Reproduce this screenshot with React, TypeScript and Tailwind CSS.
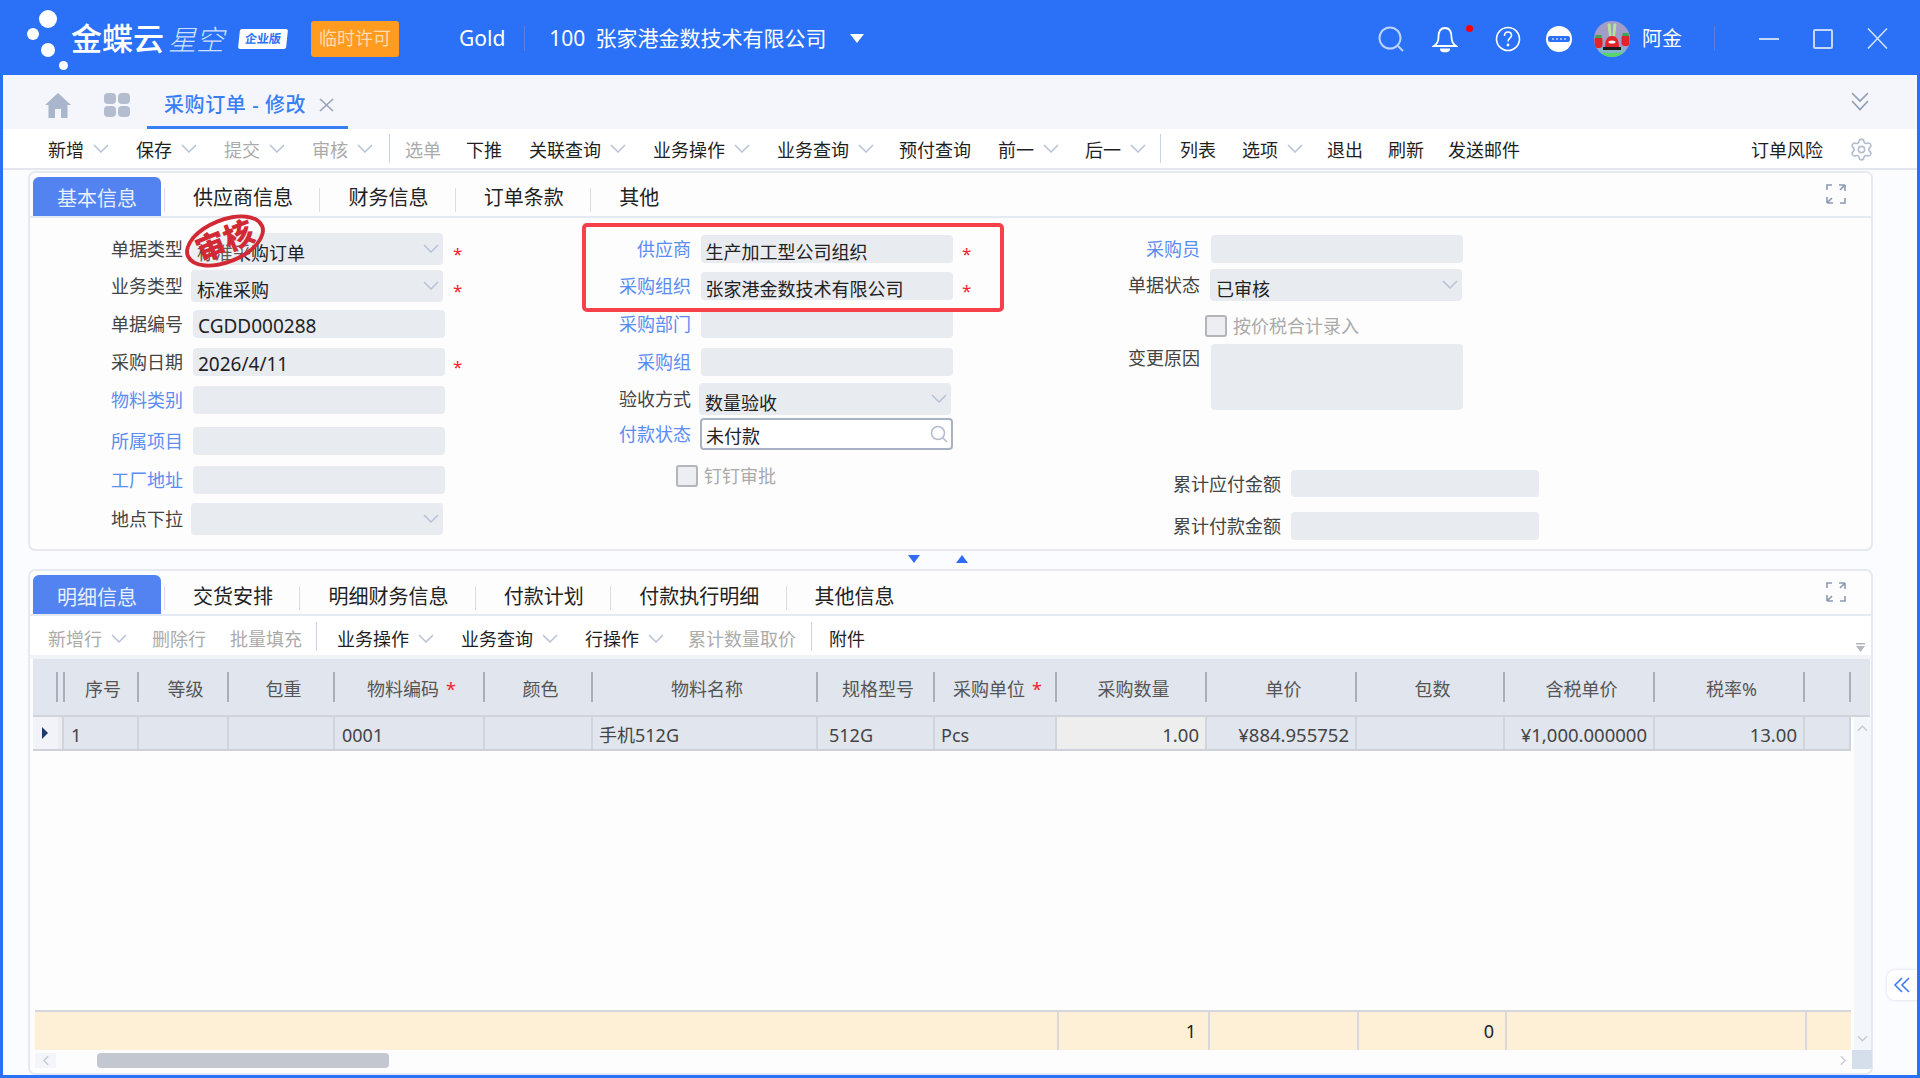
import React from "react";
import { Settings } from "lucide-react";

const FONT = "font-['Noto_Sans','Noto_Sans_CJK_SC',sans-serif]";
const GRID =
  "grid grid-cols-[25px_6px_75px_90px_106px_150px_108px_225px_117px_122px_150px_150px_148px_150px_150px_46px]";

function Chev({ className = "" }: { className?: string }) {
  return (
    <svg viewBox="0 0 16 9" className={"w-[16px] h-[9px] shrink-0 " + className} fill="none" stroke="#b8c2d6" strokeWidth="1.5">
      <path d="M1 1 L8 8 L15 1" />
    </svg>
  );
}

function ToolItem({
  label,
  chev,
  gray,
  cls = "",
}: {
  label: string;
  chev?: boolean;
  gray?: boolean;
  cls?: string;
}) {
  return (
    <div className={"flex items-center shrink-0 " + cls}>
      <span className={"text-[18px] leading-none whitespace-nowrap " + (gray ? "text-[#ababab]" : "text-[#1f1f1f]")}>{label}</span>
      {chev && <Chev className="ml-[9px] -mt-[2px]" />}
    </div>
  );
}

function Sep({ cls = "" }: { cls?: string }) {
  return <div className={"w-px h-[29px] bg-[#c9d3e4] shrink-0 " + cls} />;
}

function Expand() {
  return (
    <svg viewBox="0 0 20 20" className="w-[20px] h-[20px]" fill="none" stroke="#8c99b4" strokeWidth="1.6">
      <path d="M1 6 V1 H6" />
      <path d="M13 1 H19 M19 1 V7 M19 1 L14 6" />
      <path d="M1 13 V19 M1 19 H7 M1 19 L6 14" />
      <path d="M14 19 H19 V14" />
    </svg>
  );
}

function Label({ text, blue, cls = "" }: { text: string; blue?: boolean; cls?: string }) {
  return (
    <div className={"text-right text-[18px] leading-none shrink-0 whitespace-nowrap " + (blue ? "text-[#5a8cf2] " : "text-[#444444] ") + cls}>
      {text}
    </div>
  );
}

function Star({ cls = "" }: { cls?: string }) {
  return <span className={"text-[#f5222d] text-[17px] leading-none pt-[9px] " + cls}>*</span>;
}

function Box({ text, select, latin, cls = "" }: { text?: string; select?: boolean; latin?: boolean; cls?: string }) {
  return (
    <div className={"flex items-center justify-between bg-[#e8ebf0] rounded-[4px] shrink-0 text-[#222222] leading-none " + (latin ? "text-[19px] " : "text-[18px] ") + cls}>
      <span className={"whitespace-nowrap " + (select ? "pl-[6px] pt-[7px]" : latin ? "pl-[5px] pt-[4px]" : "pl-[4.5px] pt-[5px]")}>{text}</span>
      {select && <Chev className="mr-[4px] mb-[1px]" />}
    </div>
  );
}

function Check({ label, cls = "" }: { label: string; cls?: string }) {
  return (
    <div className={"flex items-center " + cls}>
      <div className="w-[22px] h-[22px] rounded-[3px] border-2 border-[#b3b5ba] bg-[#eceef2] shrink-0" />
      <span className="ml-[6px] text-[18px] leading-none text-[#aaaaaa] whitespace-nowrap">{label}</span>
    </div>
  );
}

function TabStrip({ tabs, lower }: { tabs: string[]; lower?: boolean }) {
  return (
    <div className="flex items-stretch h-[45px] pl-[3px] border-b-2 border-[#e5e9f1] shrink-0">
      <div className="w-[128px] mt-[4px] rounded-t-[6px] bg-[#5383f0] flex items-center justify-center text-[20px] leading-none text-[#e8efff]">
        <span className={lower ? "pt-[7px]" : "pt-[4px]"}>{tabs[0]}</span>
      </div>
      {tabs.slice(1).map((t) => (
        <div key={t} className="flex items-center">
          <div className="w-px h-[24px] bg-[#d8dee9] mt-[10px] ml-[3px]" />
          <span className={"ml-[28px] mr-[23.4px] text-[20px] leading-none text-[#222222] whitespace-nowrap " + (lower ? "pt-[9px]" : "pt-[7px]")}>{t}</span>
        </div>
      ))}
      <div className={"ml-auto pr-[25px] " + (lower ? "pt-[11px]" : "pt-[11px]")}>
        <Expand />
      </div>
    </div>
  );
}

function HCell({ text, star }: { text?: string; star?: boolean }) {
  return (
    <div className="flex items-center h-full">
      <div className="flex-1 text-center text-[18px] leading-none text-[#555555] whitespace-nowrap pl-[5px] pt-[4px]">
        {text}
        {star && <span className="ml-[7px] text-[#f5222d]">*</span>}
      </div>
      <div className="w-[2px] h-[30px] bg-[#a9aeb8] shrink-0" />
    </div>
  );
}

function RCell({ text, right, cls = "", textCls = "" }: { text?: string; right?: boolean; cls?: string; textCls?: string }) {
  return (
    <div
      className={
        "flex items-center h-full border-r-2 border-[#d0d4dc] leading-none text-[#444444] whitespace-nowrap pt-[4px] " +
        (right ? "text-[18.5px] justify-end pr-[6px] " : "text-[18px] pl-[6px] ") +
        cls
      }
    >
      <span className={textCls}>{text}</span>
    </div>
  );
}

function Avatar() {
  return (
    <svg viewBox="0 0 36 36" className="w-[36px] h-[36px] rounded-full shrink-0">
      <rect width="36" height="36" fill="#a19cc8" />
      <path d="M5 26 H31 V33 H5 Z" fill="#7fb6c9" />
      <path d="M4 32 H32 V36 H4 Z" fill="#58d66a" />
      <path d="M14 3 L15.5 15 H17 L16 3 Z M20 3 L19 15 H20.5 L22 3 Z" fill="#b7e59a" stroke="#b7e59a" />
      <path d="M11 26 C11 18 14 15 18 15 C22 15 25 18 25 26 Z" fill="#e0242a" />
      <rect x="9" y="26" width="18" height="3" fill="#1d1d1d" />
      <rect x="0.5" y="16" width="8" height="11" rx="3" fill="#e0242a" />
      <rect x="27.5" y="14" width="8" height="11" rx="3" fill="#e0242a" />
      <rect x="1.5" y="14" width="6" height="3" fill="#3fa34d" />
      <rect x="28.5" y="12" width="6" height="3" fill="#3fa34d" />
      <ellipse cx="18" cy="21" rx="3.5" ry="1.5" fill="#ffffff" />
    </svg>
  );
}

export default function App() {
  return (
    <div className={"w-[1920px] h-[1078px] overflow-hidden flex flex-col bg-[#2a71f7] " + FONT}>
      {/* top bar */}
      <header className="h-[75px] shrink-0 flex items-center text-white pt-[2px]">
        <svg viewBox="0 0 50 60" className="w-[50px] h-[60px] ml-[25px] shrink-0 -mt-[4px]" fill="#ffffff">
          <circle cx="23" cy="12" r="9" />
          <circle cx="8" cy="27" r="6" />
          <circle cx="23" cy="43" r="7" />
        </svg>
        <div className="w-[9px] h-[9px] rounded-full bg-white -ml-[16px] mt-[54px] shrink-0" />
        <span className="ml-[3px] text-[31px] leading-none font-medium whitespace-nowrap">金蝶云</span>
        <span className="ml-[4px] text-[28px] leading-none italic font-light text-[#cfe0ff] whitespace-nowrap">星空</span>
        <div className="ml-[15px] w-[48px] h-[20px] bg-white -skew-x-[6deg] rounded-[2px] flex items-center justify-center">
          <span className="text-[#2a71f7] text-[12px] font-bold leading-none whitespace-nowrap">企业版</span>
        </div>
        <div className="ml-[24px] w-[88px] h-[36px] bg-[#ff9b1e] rounded-[3px] flex items-center justify-center text-[18px] text-[#ffdcae] whitespace-nowrap">
          临时许可
        </div>
        <span className="ml-[60px] text-[21px] leading-none">Gold</span>
        <div className="w-px h-[25px] bg-[#5a7fe0] ml-[19px]" />
        <span className="ml-[24px] text-[21px] leading-none">100</span>
        <span className="ml-[10px] text-[21px] leading-none whitespace-nowrap">张家港金数技术有限公司</span>
        <svg viewBox="0 0 14 9" className="w-[14px] h-[9px] ml-[24px]" fill="#ffffff">
          <path d="M0 0 H14 L7 9 Z" />
        </svg>
        <div className="ml-auto flex items-center mr-[32px]">
          <svg viewBox="0 0 28 28" className="w-[28px] h-[28px] mr-[27px]" fill="none" stroke="#bcd3fb" strokeWidth="2">
            <circle cx="13" cy="13" r="10.5" />
            <path d="M21 21 L26 26" />
          </svg>
          <div className="relative mr-[37px]">
            <svg viewBox="0 0 26 28" className="w-[26px] h-[28px]" fill="none" stroke="#ffffff" strokeWidth="1.8">
              <path d="M13 3 C7.5 3 6.5 8 6.5 12 C6.5 16 5 19 2 21 H24 C21 19 19.5 16 19.5 12 C19.5 8 18.5 3 13 3 Z" />
              <path d="M9 24.5 H17 C16.5 27 9.5 27 9 24.5 Z" fill="#ffffff" />
            </svg>
            <span className="absolute top-0 -right-[15px] w-[7px] h-[7px] rounded-full bg-[#ff0000]" />
          </div>
          <svg viewBox="0 0 26 26" className="w-[26px] h-[26px] mr-[25px]" fill="none" stroke="#ffffff" strokeWidth="1.6">
            <circle cx="13" cy="13" r="11.5" />
            <path d="M9.5 10 C9.5 7 11 6 13 6 C15 6 16.5 7.5 16.5 9.5 C16.5 12 13 12.5 13 15.5" />
            <circle cx="13" cy="19" r="0.6" fill="#ffffff" />
          </svg>
          <svg viewBox="0 0 26 26" className="w-[26px] h-[26px] mr-[22px]">
            <circle cx="13" cy="13" r="13" fill="#ffffff" />
            <rect x="2" y="10" width="22" height="6" rx="2" fill="#2a71f7" />
            <circle cx="7" cy="13" r="1" fill="#bcd3fb" />
            <circle cx="11" cy="13" r="1" fill="#bcd3fb" />
            <circle cx="15" cy="13" r="1" fill="#bcd3fb" />
            <circle cx="19" cy="13" r="1" fill="#bcd3fb" />
          </svg>
          <Avatar />
          <span className="ml-[12px] text-[20px] leading-none whitespace-nowrap">阿金</span>
          <div className="w-px h-[25px] bg-[#5a7fe0] ml-[32px]" />
          <div className="w-[20px] h-[2px] bg-[#c4d8fb] ml-[44px]" />
          <div className="w-[20px] h-[20px] rounded-[2px] border-2 border-[#c4d8fb] ml-[34px]" />
          <svg viewBox="0 0 21 21" className="w-[21px] h-[21px] ml-[34px]" fill="none" stroke="#d5e3fc" strokeWidth="1.5">
            <path d="M1 0.5 L20 20.5 M20 0.5 L1 20.5" />
          </svg>
        </div>
      </header>

      {/* body */}
      <main className="flex-1 min-h-0 mx-[3px] mb-[3px] bg-[#fbfcff] flex flex-col relative">
        {/* doc tabs */}
        <div className="h-[54px] shrink-0 bg-[#f4f6fb] flex items-stretch">
          <svg viewBox="0 0 26 25" className="w-[26px] h-[25px] ml-[42px] mt-[18px]" fill="#a9b6cc">
            <path d="M13 0 L26 12 L22.5 12 V25 H16 V16 H10 V25 H3.5 V12 H0 Z" />
          </svg>
          <div className="grid grid-cols-2 gap-[2px] w-[26px] h-[24px] ml-[33px] mt-[18px]">
            <div className="rounded-[4px] bg-[#b4bdcf]" />
            <div className="rounded-[4px] bg-[#b4bdcf]" />
            <div className="rounded-[4px] bg-[#b4bdcf]" />
            <div className="rounded-[4px] bg-[#b4bdcf]" />
          </div>
          <div className="ml-[17px] w-[201px] border-b-[3px] border-[#3a7ef5] flex items-center pl-[17px] pt-[8px]">
            <span className="text-[20px] font-medium leading-none tracking-[0.6px] text-[#3a7ef5] whitespace-nowrap">采购订单 - 修改</span>
            <svg viewBox="0 0 15 14" className="w-[15px] h-[14px] ml-[13px]" fill="none" stroke="#9aa4b8" strokeWidth="1.7">
              <path d="M1 1 L14 13 M14 1 L1 13" />
            </svg>
          </div>
          <svg viewBox="0 0 18 19" className="w-[18px] h-[19px] ml-auto mr-[48px] mt-[17px]" fill="none" stroke="#8f9bb5" strokeWidth="1.6">
            <path d="M1 1 L9 9 L17 1 M1 9 L9 17.5 L17 9" />
          </svg>
        </div>

        {/* toolbar */}
        <div className="h-[41px] shrink-0 bg-white border-b-2 border-[#e3e6ee] flex items-center pl-[45px] pt-[2px]">
          <ToolItem label="新增" chev />
          <ToolItem label="保存" chev cls="ml-[27px]" />
          <ToolItem label="提交" chev gray cls="ml-[27px]" />
          <ToolItem label="审核" chev gray cls="ml-[27px]" />
          <Sep cls="ml-[16px] -mt-[2px]" />
          <ToolItem label="选单" gray cls="ml-[15px]" />
          <ToolItem label="下推" cls="ml-[25px]" />
          <ToolItem label="关联查询" chev cls="ml-[27px]" />
          <ToolItem label="业务操作" chev cls="ml-[27px]" />
          <ToolItem label="业务查询" chev cls="ml-[27px]" />
          <ToolItem label="预付查询" cls="ml-[25px]" />
          <ToolItem label="前一" chev cls="ml-[27px]" />
          <ToolItem label="后一" chev cls="ml-[26px]" />
          <Sep cls="ml-[14px] -mt-[2px]" />
          <ToolItem label="列表" cls="ml-[19px]" />
          <ToolItem label="选项" chev cls="ml-[26px]" />
          <ToolItem label="退出" cls="ml-[24px]" />
          <ToolItem label="刷新" cls="ml-[25px]" />
          <ToolItem label="发送邮件" cls="ml-[24px]" />
          <ToolItem label="订单风险" cls="ml-auto" />
          <Settings className="w-[25px] h-[25px] ml-[26px] mr-[43px] text-[#b4bdcf]" strokeWidth={1.5} />
        </div>

        {/* upper panel */}
        <section className="relative mt-[1px] ml-[25px] mr-[44px] h-[380px] shrink-0 rounded-[7px] border-2 border-[#e5e9f1] bg-[#fdfdfe] flex flex-col">
          <TabStrip tabs={["基本信息", "供应商信息", "财务信息", "订单条款", "其他"]} />
          <div className="flex items-start">
            {/* col 1 */}
            <div className="w-[480px] pt-[15px] flex flex-col">
              <div className="flex items-center h-[32px]">
                <Label text="单据类型" cls="w-[153px]" />
                <Box text="标准采购订单" select cls="ml-[8px] w-[252px] h-[32px]" />
                <Star cls="ml-[10px]" />
              </div>
              <div className="flex items-center h-[32px] mt-[5px]">
                <Label text="业务类型" cls="w-[153px]" />
                <Box text="标准采购" select cls="ml-[8px] w-[252px] h-[32px]" />
                <Star cls="ml-[10px]" />
              </div>
              <div className="flex items-center h-[28px] mt-[8px]">
                <Label text="单据编号" cls="w-[153px]" />
                <Box text="CGDD000288" latin cls="ml-[10px] w-[252px] h-[28px]" />
              </div>
              <div className="flex items-center h-[28px] mt-[10px]">
                <Label text="采购日期" cls="w-[153px]" />
                <Box text="2026/4/11" latin cls="ml-[10px] w-[252px] h-[28px]" />
                <Star cls="ml-[8px]" />
              </div>
              <div className="flex items-center h-[28px] mt-[10px]">
                <Label text="物料类别" blue cls="w-[153px]" />
                <Box cls="ml-[10px] w-[252px] h-[28px]" />
              </div>
              <div className="flex items-center h-[28px] mt-[13px]">
                <Label text="所属项目" blue cls="w-[153px]" />
                <Box cls="ml-[10px] w-[252px] h-[28px]" />
              </div>
              <div className="flex items-center h-[28px] mt-[11px]">
                <Label text="工厂地址" blue cls="w-[153px]" />
                <Box cls="ml-[10px] w-[252px] h-[28px]" />
              </div>
              <div className="flex items-center h-[32px] mt-[9px]">
                <Label text="地点下拉" cls="w-[153px]" />
                <Box select cls="ml-[8px] w-[252px] h-[32px]" />
              </div>
            </div>
            {/* col 2 */}
            <div className="w-[490px] pt-[17px] flex flex-col">
              <div className="flex items-center h-[28px]">
                <Label text="供应商" blue cls="w-[181px]" />
                <Box text="生产加工型公司组织" cls="ml-[10px] w-[252px] h-[28px]" />
                <Star cls="ml-[9px]" />
              </div>
              <div className="flex items-center h-[28px] mt-[9px]">
                <Label text="采购组织" blue cls="w-[181px]" />
                <Box text="张家港金数技术有限公司" cls="ml-[10px] w-[252px] h-[28px]" />
                <Star cls="ml-[9px]" />
              </div>
              <div className="flex items-center h-[28px] mt-[10px]">
                <Label text="采购部门" blue cls="w-[181px]" />
                <Box cls="ml-[10px] w-[252px] h-[28px]" />
              </div>
              <div className="flex items-center h-[28px] mt-[10px]">
                <Label text="采购组" blue cls="w-[181px]" />
                <Box cls="ml-[10px] w-[252px] h-[28px]" />
              </div>
              <div className="flex items-center h-[32px] mt-[7px]">
                <Label text="验收方式" cls="w-[181px]" />
                <Box text="数量验收" select cls="ml-[8px] w-[252px] h-[32px]" />
              </div>
              <div className="flex items-center h-[32px] mt-[3px]">
                <Label text="付款状态" blue cls="w-[181px]" />
                <div className="ml-[9px] w-[253px] h-[32px] rounded-[4px] border-2 border-[#a9b2c3] bg-white flex items-center justify-between text-[18px] leading-none text-[#222222]">
                  <span className="pl-[4px] pt-[4px]">未付款</span>
                  <svg viewBox="0 0 18 18" className="w-[18px] h-[18px] mr-[3px]" fill="none" stroke="#b4bdcf" strokeWidth="1.6">
                    <circle cx="8" cy="8" r="6.5" />
                    <path d="M12.5 12.5 L17 17" />
                  </svg>
                </div>
              </div>
              <Check label="钉钉审批" cls="ml-[166px] mt-[15px]" />
            </div>
            {/* col 3 */}
            <div className="flex-1 pt-[17px] flex flex-col">
              <div className="flex items-center h-[28px]">
                <Label text="采购员" blue cls="w-[200px]" />
                <Box cls="ml-[11px] w-[252px] h-[28px]" />
              </div>
              <div className="flex items-center h-[32px] mt-[6px]">
                <Label text="单据状态" cls="w-[200px]" />
                <Box text="已审核" select cls="ml-[10px] w-[252px] h-[32px]" />
              </div>
              <Check label="按价税合计录入" cls="ml-[205px] mt-[14px]" />
              <div className="flex items-start mt-[7px]">
                <Label text="变更原因" cls="w-[200px] pt-[5px]" />
                <Box cls="ml-[11px] w-[252px] h-[66px]" />
              </div>
              <div className="flex items-center h-[27px] mt-[60px]">
                <Label text="累计应付金额" cls="w-[281px]" />
                <Box cls="ml-[10px] w-[248px] h-[27px]" />
              </div>
              <div className="flex items-center h-[28px] mt-[15px]">
                <Label text="累计付款金额" cls="w-[281px]" />
                <Box cls="ml-[10px] w-[248px] h-[28px]" />
              </div>
            </div>
          </div>

          {/* stamp over the first field */}
          <div className="absolute left-[153px] top-[45px] w-[84px] h-[46px] rounded-[50%] border-[4px] border-[#d22a35] -rotate-[22deg] flex items-center justify-center bg-[#ffffff40]">
            <span className="text-[30px] leading-none font-black text-[#d22a35] whitespace-nowrap">审核</span>
          </div>
          {/* highlight box */}
          <div className="absolute left-[552px] top-[50px] w-[422px] h-[89px] rounded-[5px] border-[4px] border-[#f6404a] pointer-events-none" />
        </section>

        {/* splitter */}
        <div className="h-[18px] shrink-0 flex items-center pb-[3px]">
          <svg viewBox="0 0 12 8" className="w-[12px] h-[8px] ml-[905px]" fill="#2f6bf6">
            <path d="M0 0 H12 L6 8 Z" />
          </svg>
          <svg viewBox="0 0 12 8" className="w-[12px] h-[8px] ml-[36px]" fill="#2f6bf6">
            <path d="M0 8 H12 L6 0 Z" />
          </svg>
        </div>

        {/* lower panel */}
        <section className="ml-[25px] mr-[44px] flex-1 min-h-0 rounded-[7px] border-2 border-[#e5e9f1] bg-[#fdfdfd] flex flex-col">
          <TabStrip lower tabs={["明细信息", "交货安排", "明细财务信息", "付款计划", "付款执行明细", "其他信息"]} />
          {/* sub toolbar */}
          <div className="h-[39px] shrink-0 bg-white flex items-center pl-[18px] pt-[7px] relative">
            <ToolItem label="新增行" chev gray />
            <ToolItem label="删除行" gray cls="ml-[25px]" />
            <ToolItem label="批量填充" gray cls="ml-[24px]" />
            <Sep cls="ml-[14px] -mt-[6px]" />
            <ToolItem label="业务操作" cls="ml-[20px]" chev />
            <ToolItem label="业务查询" cls="ml-[27px]" chev />
            <ToolItem label="行操作" cls="ml-[27px]" chev />
            <ToolItem label="累计数量取价" gray cls="ml-[24px]" />
            <Sep cls="ml-[15px] -mt-[6px]" />
            <ToolItem label="附件" cls="ml-[17px]" />
            <svg viewBox="0 0 9 9" className="w-[9px] h-[9px] absolute right-[6px] bottom-[3px]" fill="#b3b7bf">
              <path d="M0 0 H9 V1.5 H0 Z M0 3 H9 L4.5 9 Z" />
            </svg>
          </div>
          <div className="h-[4px] shrink-0 bg-[#f2f3f6]" />

          {/* grid */}
          <div className="ml-[3px] flex-1 min-h-0 flex flex-col">
            <div className={GRID + " h-[58px] shrink-0 bg-[#e1e5ee] border-b-2 border-[#d0d3da] mr-px"}>
              <HCell />
              <HCell />
              <HCell text="序号" />
              <HCell text="等级" />
              <HCell text="包重" />
              <HCell text="物料编码" star />
              <HCell text="颜色" />
              <HCell text="物料名称" />
              <HCell text="规格型号" />
              <HCell text="采购单位" star />
              <HCell text="采购数量" />
              <HCell text="单价" />
              <HCell text="包数" />
              <HCell text="含税单价" />
              <HCell text="税率%" />
              <HCell />
            </div>
            <div className="flex-1 min-h-0 flex">
              <div className="w-[1818px] shrink-0 flex flex-col">
                <div className={GRID + " h-[34px] shrink-0 bg-[#e1e5ee] border-b-2 border-[#cdd1d9]"}>
                  <div className="flex items-center justify-center h-full bg-[#f1f3f8] pl-[6px] pr-[8px]">
                    <svg viewBox="0 0 6 12" className="w-[6px] h-[12px]" fill="#1c3a6e">
                      <path d="M0 0 L6 6 L0 12 Z" />
                    </svg>
                  </div>
                  <div className="h-full bg-[#e9ecf2] border-r-2 border-[#d0d4dc]" />
                  <RCell text="1" textCls="ml-[1px]" />
                  <RCell />
                  <RCell />
                  <RCell text="0001" textCls="ml-[1px]" />
                  <RCell />
                  <RCell text="手机512G" />
                  <RCell text="512G" textCls="ml-[5px]" />
                  <RCell text="Pcs" />
                  <RCell text="1.00" right cls="bg-[#eeeeee]" />
                  <RCell text="¥884.955752" right />
                  <RCell />
                  <RCell text="¥1,000.000000" right />
                  <RCell text="13.00" right />
                  <RCell />
                </div>
                <div className="flex-1 min-h-0 bg-[#fdfdfd]" />
                <div className="ml-[2px] h-[40px] shrink-0 bg-[#fdf0d6] border-t-2 border-[#d5d7dc] grid grid-cols-[1024px_151px_149px_148px_300px_44px] text-[18px] leading-none text-[#1f1f1f]">
                  <div className="h-full border-r-2 border-[#d8d9dc]" />
                  <div className="h-full border-r-2 border-[#d8d9dc] flex items-center justify-end pr-[12px]">1</div>
                  <div className="h-full border-r-2 border-[#d8d9dc]" />
                  <div className="h-full border-r-2 border-[#d8d9dc] flex items-center justify-end pr-[11px]">0</div>
                  <div className="h-full border-r-2 border-[#d8d9dc]" />
                  <div className="h-full" />
                </div>
              </div>
              {/* vertical scrollbar */}
              <div className="w-[17px] ml-[3px] shrink-0 bg-[#f3f6fb] flex flex-col justify-between items-center py-[8px]">
                <svg viewBox="0 0 12 7" className="w-[11px] h-[7px]" fill="none" stroke="#c5cad3" strokeWidth="1.5">
                  <path d="M1 6 L6 1 L11 6" />
                </svg>
                <svg viewBox="0 0 12 7" className="w-[11px] h-[7px]" fill="none" stroke="#c5cad3" strokeWidth="1.5">
                  <path d="M1 1 L6 6 L11 1" />
                </svg>
              </div>
            </div>
            {/* horizontal scrollbar */}
            <div className="h-[23px] shrink-0 flex items-start pt-[3px] pl-[2px]">
              <div className="w-[21px] h-[15px] bg-[#f3f5fa] flex items-center justify-center shrink-0">
                <svg viewBox="0 0 7 12" className="w-[6px] h-[11px]" fill="none" stroke="#c5cad3" strokeWidth="1.5">
                  <path d="M6 1 L1 6 L6 11" />
                </svg>
              </div>
              <div className="w-[292px] h-[15px] ml-[41px] rounded-[4px] bg-[#c3c7d0] shrink-0" />
              <svg viewBox="0 0 7 12" className="w-[6px] h-[11px] ml-[1451px] mt-[2px] shrink-0" fill="none" stroke="#c5cad3" strokeWidth="1.5">
                <path d="M1 1 L6 6 L1 11" />
              </svg>
              <div className="w-[20px] h-[19px] -mt-[3px] ml-[6px] bg-[#d5dfeb] rounded-br-[3px] shrink-0" />
            </div>
          </div>
        </section>

        {/* side collapse handle */}
        <div className="absolute right-0 top-[895px] w-[30px] h-[30px] rounded-l-[8px] bg-white shadow-[0_0_3px_rgba(120,140,180,0.35)] flex items-center justify-center">
          <svg viewBox="0 0 18 16" className="w-[18px] h-[16px]" fill="none" stroke="#3a78f2" strokeWidth="1.5">
            <path d="M9 1 L2 8 L9 15 M16 1 L9 8 L16 15" />
          </svg>
        </div>
      </main>
    </div>
  );
}
